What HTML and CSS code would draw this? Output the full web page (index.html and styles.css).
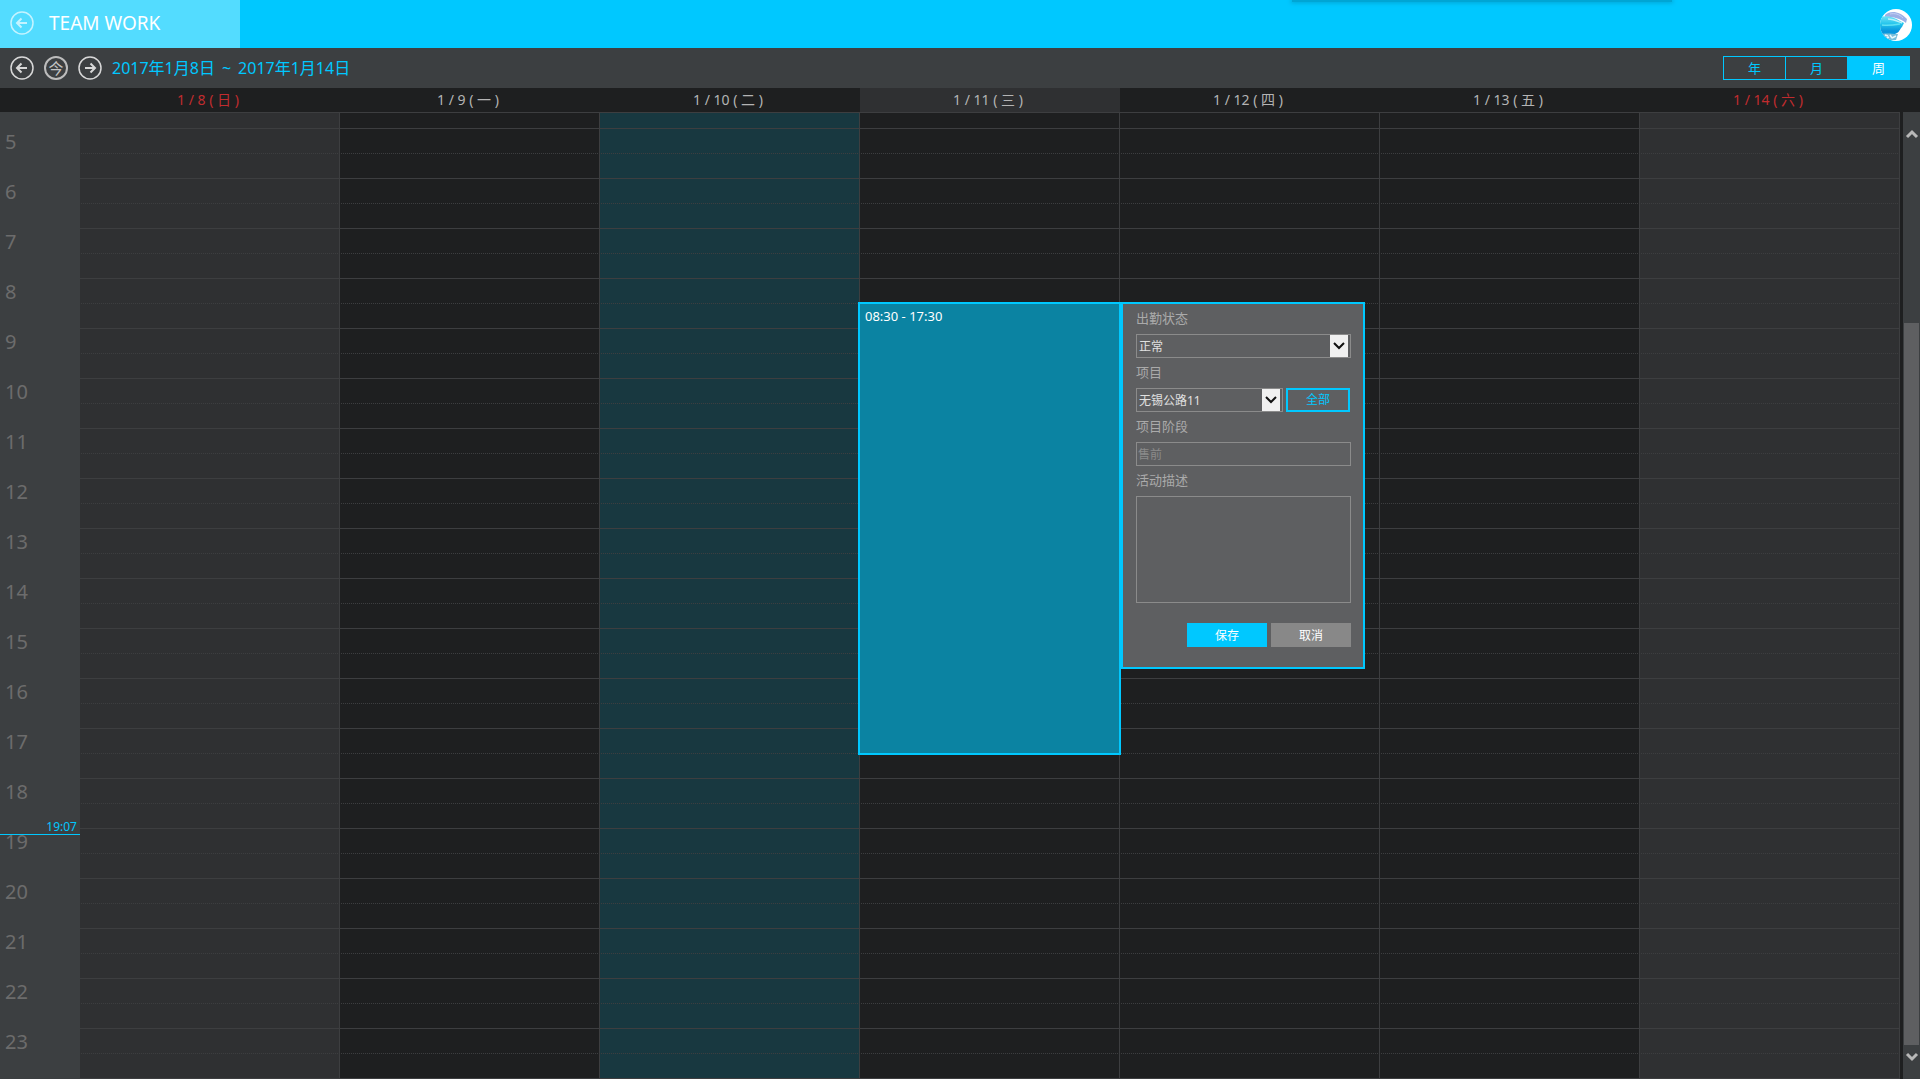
FILE: index.html
```html
<!DOCTYPE html>
<html lang="zh-CN">
<head>
<meta charset="utf-8">
<title>TEAM WORK</title>
<link rel="stylesheet" href="styles.css">
</head>
<body>
<header class="topbar">
  <div class="brand">
    <button class="round faint" type="button" aria-label="返回"><svg viewBox="0 0 24 24"><circle cx="12" cy="12" r="11"/><path d="M17 12H7M11.500 7.500L7 12l4.500 4.500"/></svg></button>
    <h1 class="title">TEAM WORK</h1>
  </div>
  <div class="notice"></div>
  <svg class="avatar" viewBox="0 0 32 32" aria-hidden="true">
    <defs>
      <clipPath id="disc"><circle cx="16" cy="16" r="16"/></clipPath>
      <linearGradient id="sea" x1="0" y1="0" x2="0" y2="1"><stop offset="0" stop-color="#6fe2f6"/><stop offset=".4" stop-color="#22c4ec"/><stop offset=".75" stop-color="#0894dc"/><stop offset="1" stop-color="#0a9fe0"/></linearGradient>
    </defs>
    <g clip-path="url(#disc)">
      <rect width="32" height="32" fill="#fff"/>
      <path d="M5 6C10 1 20 2 27 10L26 14C20 9 14 8 5 8Z" fill="#9cb0e6"/>
      <path d="M10 5c5-1 9 0 13 4" fill="none" stroke="#c4cff2"/>
      <path d="M0 8C6 6 14 8 20 12L24 14L22 18C19 21 20 24 12 26L0 27Z" fill="url(#sea)"/>
      <path d="M8 10c5 0 9 2 14 4" fill="none" stroke="#b9f1fb" stroke-width="1.500"/>
      <path d="M2 16c6 1 12 0 18-1" fill="none" stroke="#5fe0f4" stroke-width="1.500"/>
      <path d="M2 25c5-1 10 0 16 0l-2 6H7Z" fill="#78bedb"/>
      <path d="M5 26l3 1M10 26l2 3M12 29l4-2M7 29l2-1" stroke="#e8f8fc" stroke-width="1.500"/>
    </g>
  </svg>
</header>
<nav class="toolbar">
  <button class="round" type="button" aria-label="上一周"><svg viewBox="0 0 24 24"><circle cx="12" cy="12" r="11"/><path d="M17 12H7M11.500 7.500L7 12l4.500 4.500"/></svg></button>
  <button class="round now" type="button">今</button>
  <button class="round" type="button" aria-label="下一周"><svg viewBox="0 0 24 24"><circle cx="12" cy="12" r="11"/><path d="M7 12h10M12.500 7.500L17 12l-4.500 4.500"/></svg></button>
  <div class="range"><span>2017年1月8日</span><span>~</span><span>2017年1月14日</span></div>
  <div class="views">
    <button type="button">年</button><button type="button">月</button><button class="active" type="button">周</button>
  </div>
</nav>
<div class="days">
  <span class="off">1 / 8 ( 日 )</span><span>1 / 9 ( 一 )</span><span>1 / 10 ( 二 )</span><span class="picked">1 / 11 ( 三 )</span><span>1 / 12 ( 四 )</span><span>1 / 13 ( 五 )</span><span class="off">1 / 14 ( 六 )</span>
</div>
<main class="week">
  <div class="hours">
    <span>5</span><span>6</span><span>7</span><span>8</span><span>9</span><span>10</span><span>11</span><span>12</span><span>13</span><span>14</span><span>15</span><span>16</span><span>17</span><span>18</span><span>19</span><span>20</span><span>21</span><span>22</span><span>23</span>
    <div class="clock" style="top:706px">19:07</div>
  </div>
  <div class="day weekend"></div>
  <div class="day"></div>
  <div class="day today"></div>
  <div class="day">
    <div class="event" style="top:190px;height:453px">08:30 - 17:30</div>
    <form class="editor" style="top:190px">
      <label for="status">出勤状态</label>
      <div class="pick"><select id="status"><option>正常</option></select><svg viewBox="0 0 18 22"><path d="M4 8l5 5 5-5"/></svg></div>
      <label for="project">项目</label>
      <div class="line">
        <div class="pick"><select id="project"><option>无锡公路11</option></select><svg viewBox="0 0 18 22"><path d="M4 8l5 5 5-5"/></svg></div>
        <button class="all" type="button">全部</button>
      </div>
      <label for="phase">项目阶段</label>
      <input id="phase" class="phase" type="text" value="售前" readonly>
      <label for="note">活动描述</label>
      <textarea id="note"></textarea>
      <div class="actions"><button class="save" type="button">保存</button><button class="cancel" type="button">取消</button></div>
    </form>
  </div>
  <div class="day"></div>
  <div class="day"></div>
  <div class="day weekend"></div>
  <div class="scroll">
    <svg viewBox="0 0 16 16"><path d="M3 10l5-5 5 5"/></svg>
    <div class="track"><div class="thumb"></div></div>
    <svg viewBox="0 0 16 16"><path d="M3 5l5 5 5-5"/></svg>
  </div>
</main>
</body>
</html>
```
FILE: styles.css
```css
* { box-sizing: border-box; }
body { margin: 0; background: #fff; color: #b4b4b4; font-family: "Noto Sans", "Noto Sans CJK SC", sans-serif; font-size: 13px; }
button, input, select, textarea { margin: 0; font: inherit; border-radius: 0; }
button { padding: 0; border: 0; background: none; color: inherit; }

.topbar { display: flex; height: 48px; background: #00c8ff; }
.brand { display: flex; align-items: center; gap: 15px; width: 240px; padding: 0 10px 2px; background: #53dcff; }
.title { margin: 0; color: #fff; font-size: 19px; font-weight: 400; line-height: 24px; }
.notice { width: 380px; height: 2px; margin: 0 208px 0 auto; background: #00a5d4; box-shadow: 0 0 4px 1px #00a5d4; }
.avatar { width: 32px; height: 32px; margin: 9px 8px 0 0; }

.toolbar { display: flex; align-items: center; gap: 10px; height: 40px; padding: 0 10px; background: #3c3f41; }
.round { width: 24px; height: 24px; color: #d8d8d8; }
.round svg { display: block; width: 24px; height: 24px; fill: none; stroke: currentColor; stroke-width: 2; }
.round circle { stroke-width: 1.500; }
.faint { color: #c4f3ff; }
.now { border: 2px solid #bcbcbc; border-radius: 50%; font-size: 15px; line-height: 20px; color: #c4c4c4; }
.range { display: flex; gap: 7px; color: #00c8ff; font-size: 16px; line-height: 24px; }
.views { display: flex; width: 187px; height: 24px; margin-left: auto; border: 1px solid #00c8ff; }
.views button { flex: 1; color: #00c8ff; line-height: 22px; }
.views button + button { border-left: 1px solid #00c8ff; }
.views .active { background: #00c8ff; color: #fff; }

.days { display: grid; grid-template-columns: repeat(7, 1fr); height: 24px; padding: 0 20px 0 80px; background: #1e1f20; font-size: 14px; line-height: 24px; text-align: center; }
.days span { padding-right: 4px; }
.off { color: #c12c2f; }
.picked { background: #2f3032; }

.week { display: grid; grid-template-columns: 80px repeat(7, 1fr) 20px; height: 967px; background: #1e1f20; }
.hours { position: relative; display: flex; flex-direction: column; padding-top: 16px; background: #3c3f41; color: #6c6c6c; font-size: 20px; }
.hours span { height: 50px; padding: 0 5px; line-height: 28px; }
.clock { position: absolute; left: 0; right: 0; height: 17px; padding-right: 3px; border-bottom: 1px solid #00c8ff; color: #00c8ff; font-size: 12px; line-height: 18px; text-align: right; }
.day { position: relative; border: solid #3d3e40; border-width: 1px 1px 1px 0;
  background:
    repeating-linear-gradient(to bottom, transparent 0 15px, #3d3e40 15px 16px, transparent 16px 50px),
    repeating-linear-gradient(to right, var(--fill) 0 1px, transparent 1px 2px),
    repeating-linear-gradient(to bottom, transparent 0 40px, #3d3e40 40px 41px, transparent 41px 50px);
  background-color: var(--fill); --fill: #1e1f20; }
.weekend { --fill: #2f3032; }
.today { --fill: #183840; }
.event { position: absolute; z-index: 1; left: -2px; right: -2px; margin-top: -1px; padding: 4px 5px; border: 2px solid #00c8ff; background: #0b83a2; color: #fff; line-height: 16px; }
.editor { position: absolute; z-index: 2; left: 100%; width: 244px; margin: -1px 0 0 2px; padding: 0 12px 20px 13px; border: 2px solid #00c8ff; background: #5e5f61; color: #aaa; }
.editor label { display: block; height: 30px; line-height: 28px; }
.pick { display: grid; grid-template-columns: 1fr 18px; flex: 1; height: 24px; padding-right: 2px; border: 1px solid #8b8b8b; }
.pick select { grid-area: 1 / 1 / 2 / 3; padding: 0 2px; appearance: none; border: 0; background: none; color: #e0e0e0; font-size: 12px; }
.pick svg { grid-area: 1 / 2 / 2 / 3; width: 18px; height: 22px; background: #f0f0f0; fill: none; stroke: #111; stroke-width: 2; pointer-events: none; }
.line { display: flex; gap: 3px; padding-right: 1px; }
.all { width: 64px; height: 24px; border: 2px solid #00c8ff; color: #00c8ff; font-size: 12px; line-height: 20px; }
.phase, .editor textarea { display: block; width: 100%; border: 1px solid #8b8b8b; background: none; outline: 0; }
.phase { height: 24px; padding: 0 1px; color: #8b8b8b; font-size: 12px; }
.editor textarea { height: 107px; padding: 2px; color: #e0e0e0; resize: none; }
.actions { display: flex; justify-content: flex-end; gap: 4px; margin-top: 20px; }
.actions button { width: 80px; height: 24px; color: #fff; font-size: 12px; }
.save { background: #00c8ff; }
.cancel { background: #888; }

.scroll { display: flex; flex-direction: column; align-items: center; margin-left: 3px; padding: 15px 0 14px; background: #3c3f41; }
.scroll svg { width: 16px; height: 16px; fill: none; stroke: #b8b8b8; stroke-width: 3; }
.track { display: flex; flex: 1; padding: 180px 0 4px; }
.thumb { width: 15px; background: #5e5f61; }
```
